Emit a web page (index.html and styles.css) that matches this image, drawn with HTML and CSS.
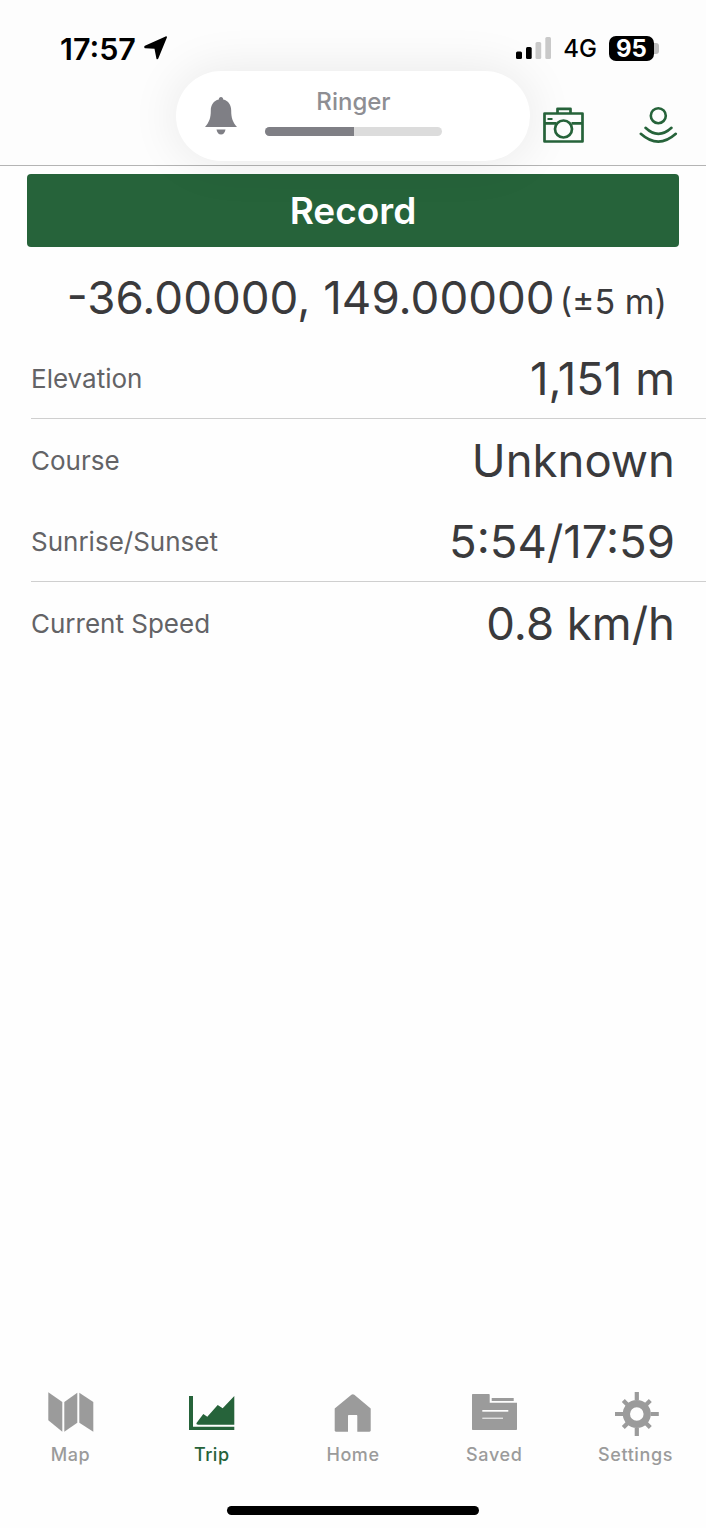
FILE: index.html
```html
<!DOCTYPE html>
<html lang="en">
<head>
<meta charset="utf-8">
<title>Trip</title>
<link rel="stylesheet" href="styles.css">
</head>
<body>
<div class="screen">
  <header class="top">
    <div class="status">
      <div class="status-left">
        <span class="time">17:57</span>
        <svg class="loc" viewBox="0 0 24 24" width="24" height="24"><path d="M.9 9.800 21.600.4c.9-.4 1.600.2 1.300 1.100L14.300 22.600c-.4 1-1.700.9-1.900-.2L10.500 12.800 1.300 12.300C.1 12.200-.2 10.400.9 9.800Z" fill="#000"/></svg>
      </div>
      <div class="status-right">
        <svg class="signal" viewBox="0 0 35 22" width="35" height="22"><rect x="0" y="14.500" width="6" height="7.500" rx="1.500" fill="#000"/><rect x="10" y="10" width="5.700" height="12" rx="1.500" fill="#000"/><rect x="19.500" y="5" width="5.700" height="17" rx="1.500" fill="#c9c9c9"/><rect x="29.300" y="0" width="5.700" height="22" rx="1.500" fill="#c9c9c9"/></svg>
        <span class="net">4G</span>
        <div class="battery"><span class="battery-level">95</span><span class="battery-cap"></span></div>
      </div>
    </div>
    <div class="actions">
      <svg class="act-camera" viewBox="0 0 41 37" width="41" height="37" fill="none" stroke="#26633a" stroke-width="2.700" stroke-linejoin="round"><path d="M1.500 7.500h38v28h-38Z"/><path d="M14.500 7.500V2.800h13v4.700"/><path d="M1.500 17.300h11.500M28.500 17.300h11"/><circle cx="20.500" cy="23" r="8.500"/><path d="M4.500 13h5" stroke-width="2"/></svg>
      <svg class="act-track" viewBox="0 0 40 38" width="40" height="38" fill="none" stroke="#26633a" stroke-width="2.600" stroke-linecap="round"><circle cx="20.300" cy="9.700" r="7.500"/><path d="M7.500 21.800Q20.300 34 33.500 21.800"/><path d="M2.800 27.800Q20.300 43.500 37.800 27.800"/></svg>
    </div>
  </header>

  <div class="hud">
    <svg class="hud-bell" viewBox="0 0 32 38" width="32" height="38"><path d="M16 0c1.400 0 2.200 1 2.200 2.400 5.300 1.200 8 5.500 8 11 0 7.500 1.500 11.500 5.800 16.600H0c4.300-5.100 5.800-9.100 5.800-16.600 0-5.500 2.700-9.800 8-11C13.800 1 14.600 0 16 0Z" fill="#7f7f85"/><path d="M11.500 32.500h9c-.5 3-2.200 5-4.500 5s-4-2-4.500-5Z" fill="#7f7f85"/></svg>
    <div class="hud-body">
      <span class="hud-label">Ringer</span>
      <div class="hud-track"><div class="hud-fill"></div></div>
    </div>
  </div>

  <main class="content">
    <button class="record">Record</button>
    <div class="coords"><span class="coords-main">-36.00000, 149.00000</span><span class="coords-acc">(±5 m)</span></div>
    <div class="row line"><span class="row-label">Elevation</span><span class="row-value">1,151 m</span></div>
    <div class="row"><span class="row-label">Course</span><span class="row-value">Unknown</span></div>
    <div class="row line"><span class="row-label">Sunrise/Sunset</span><span class="row-value">5:54/17:59</span></div>
    <div class="row"><span class="row-label">Current Speed</span><span class="row-value">0.8 km/h</span></div>
  </main>

  <nav class="tabs">
    <div class="tab">
      <svg viewBox="0 0 46 44" width="46" height="44" fill="#9b9b9b"><path d="M.3.300 14.300 10v29.700L.3 28.300Z"/><path d="M16.300 10 29.300.7v30l-13 9Z"/><path d="M31.300.7 45.300 10v29.700l-14-9Z"/></svg>
      <span>Map</span>
    </div>
    <div class="tab active">
      <svg viewBox="0 0 46 44" width="46" height="44" fill="#26633a"><path d="M0 4h4v30.700h41.300V38H0Z"/><path d="M7.700 30.700 14.300 22l4 2.700L28.700 13l5 3.300L45.300 4v28.700H9.300c-1.500 0-2.400-1-1.600-2Z"/></svg>
      <span>Trip</span>
    </div>
    <div class="tab">
      <svg viewBox="0 0 46 44" width="46" height="44" fill="#9b9b9b"><path d="M21.400 2.800c.9-.8 2-.8 2.900 0L40.700 16.500v22c0 .7-.5 1.200-1.200 1.200H27.300V24c0-.6-.4-1-1-1H19c-.6 0-1 .4-1 1v15.700H5.900c-.7 0-1.200-.5-1.200-1.200v-22Z"/></svg>
      <span>Home</span>
    </div>
    <div class="tab">
      <svg viewBox="0 0 46 44" width="46" height="44"><path d="M1 3c0-.6.4-1 1-1h15.700c.6 0 1 .4 1 1v7.700H46V37c0 .6-.4 1-1 1H2c-.6 0-1-.4-1-1Z" fill="#9b9b9b"/><rect x="20.700" y="6" width="22" height="3" fill="#9b9b9b"/><rect class="tab-cut" x="11.300" y="18" width="26" height="1.700"/><rect class="tab-cut" x="11.300" y="25.700" width="20.700" height="1"/></svg>
      <span>Saved</span>
    </div>
    <div class="tab">
      <svg viewBox="0 0 46 44" width="46" height="44" fill="none" stroke="#9b9b9b"><circle cx="23.800" cy="22" r="10.400" stroke-width="7.200"/><path d="M23.800 0v8M23.800 36v8M2 22h8M37.600 22h8.200M10.300 8.500l5 5M32.300 30.500l5 5M37.300 8.500l-5 5M15.300 30.500l-5 5" stroke-width="4.200"/></svg>
      <span>Settings</span>
    </div>
  </nav>
  <div class="home-bar"><div class="home-indicator"></div></div>
</div>
</body>
</html>
```

FILE: styles.css
```css
* { box-sizing: border-box; }
html, body { margin: 0; padding: 0; background: #fefefe; }
body { font-family: Inter, "Liberation Sans", sans-serif; color: #3a3a3c; }

.screen {
  position: relative;
  width: 706px;
  height: 1528px;
  display: flex;
  flex-direction: column;
  overflow: hidden;
  background: #fefefe;
}

.top {
  height: 166px;
  flex: none;
  border-bottom: 1px solid #b4b4b4;
  padding: 30px 28px 0 60px;
  background: #fdfdfd;
}
.status { display: flex; justify-content: space-between; align-items: center; height: 36px; }
.status-left { display: flex; align-items: center; gap: 8px; }
.time { font-size: 30.500px; font-weight: 600; color: #000; }
.loc { display: block; }
.status-right { display: flex; align-items: center; gap: 12px; padding-right: 19px; }
.net { font-size: 24px; font-weight: 500; color: #000; }
.signal { display: block; }
.battery { display: flex; align-items: center; }
.battery-level {
  width: 45px; height: 25px; border-radius: 7px;
  background: #000; color: #fff;
  font-size: 24px; font-weight: 700; line-height: 25px; text-align: center;
}
.battery-cap { width: 5px; height: 11px; background: #bdbdbd; border-radius: 0 3px 3px 0; }

.actions { display: flex; justify-content: flex-end; align-items: flex-start; gap: 54px; padding-top: 40px; }
.act-camera, .act-track { display: block; }

.hud {
  position: absolute;
  left: 176px; top: 71px;
  width: 354px; height: 90px;
  border-radius: 45px;
  background: #fff;
  box-shadow: 0 0 50px rgba(0,0,0,.09);
  display: flex;
  align-items: center;
  padding-left: 29px;
  gap: 28px;
}
.hud-bell { display: block; }
.hud-body { width: 177px; display: flex; flex-direction: column; align-items: center; gap: 11px; margin-bottom: 8px; }
.hud-label { font-size: 24px; font-weight: 550; color: #8e8e93; line-height: 28px; }
.hud-track { width: 100%; height: 9px; border-radius: 5px; background: #dcdcdc; overflow: hidden; }
.hud-fill { width: 50%; height: 100%; background: #7f7f85; }

.content { flex: 1; display: flex; flex-direction: column; }
.record {
  display: block;
  margin: 8px 27px 0;
  height: 73px;
  border: 0;
  border-radius: 4px;
  background: #26633a;
  color: #fff;
  font: 600 37px Inter, "Liberation Sans", sans-serif;
}
.coords {
  height: 90.500px;
  display: flex;
  justify-content: flex-end;
  align-items: baseline;
  padding: 21px 39px 0 0;
  gap: 5px;
}
.coords-main { font-size: 45.700px; line-height: 60px; }
.coords-acc { font-size: 34px; }

.row {
  height: 81.500px;
  margin-left: 31px;
  padding: 2px 31px 0 0;
  display: flex;
  justify-content: space-between;
  align-items: center;
}
.row.line { border-bottom: 1px solid #cfcfcf; }
.row-label { font-size: 26px; color: #636366; }
.row-value { font-size: 45.500px; }

.tabs { flex: none; display: flex; justify-content: space-between; }
.tab { width: 141px; display: flex; flex-direction: column; align-items: center; gap: 8px; font-size: 18px; font-weight: 450; letter-spacing: .6px; color: #9b9b9b; }
.tab span { line-height: 22px; }
.tab svg { display: block; }
.tab-cut { fill: #fefefe; }
.tab.active { color: #26633a; font-weight: 500; letter-spacing: .5px; }

.home-bar { flex: none; height: 62px; display: flex; justify-content: center; padding-top: 40px; }
.home-indicator { width: 252px; height: 9px; border-radius: 5px; background: #000; }
```
